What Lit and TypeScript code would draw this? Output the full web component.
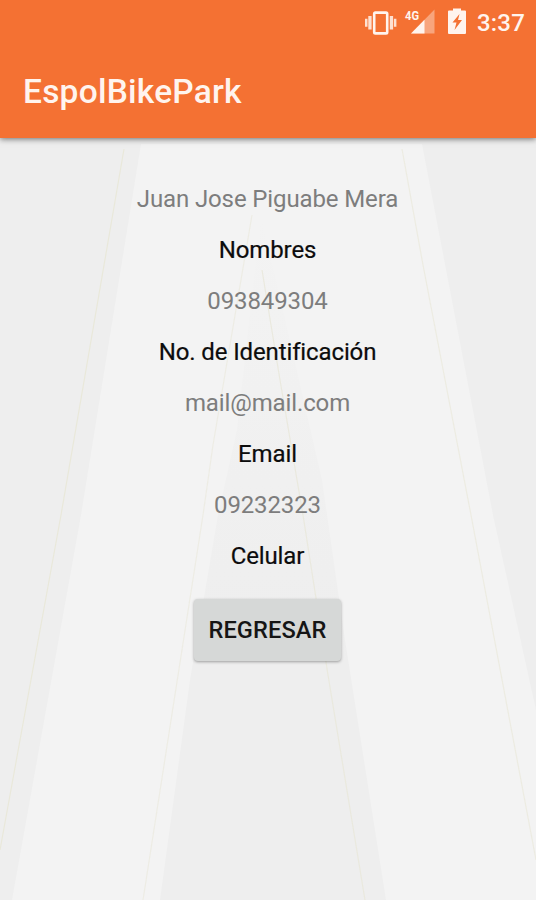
import { LitElement, html, css, svg } from "lit";
import { customElement, property } from "lit/decorators.js";

@customElement("status-bar")
class StatusBar extends LitElement {
  static styles = css`
    :host { display: flex; height: 45px; align-items: center; justify-content: flex-end; color: #fff4ee; }
    .icons { display: block; width: 116px; height: 45px; }
    .time { width: 59px; font-size: 24px; font-weight: 500; line-height: 46px; letter-spacing: .2px; white-space: nowrap; }
    .net { font: 700 12.5px "Roboto", sans-serif; }
  `;
  render() {
    return html`
      <svg class="icons" viewBox="361 0 116 45" fill="currentColor">
        ${svg`
          <rect x="374.200" y="12.600" width="13" height="20.800" rx="1.200" fill="none" stroke="currentColor" stroke-width="2.600"/>
          <path d="M368.300 16h3.300v13.500h-3.300zM365 18.800h2.500v8H365zM389.800 16h3.300v13.500h-3.300zM393.900 18.800h2.500v8h-2.500z" opacity=".85"/>
          <text class="net" x="405" y="19.600" textLength="14" lengthAdjust="spacingAndGlyphs">4G</text>
          <path d="M434.500 9.500V33.500H411z" opacity=".4"/>
          <path d="M424.500 19.700V33.500H411z"/>
          <path fill-rule="evenodd" d="M449 10.500h4V8.500h8v2h4q1 0 1 1v21.500q0 1-1 1H449q-1 0-1-1V11.500q0-1 1-1zM459.500 14l-7 8.500h4l-2 7.500 7.500-10h-4z"/>
        `}
      </svg>
      <span class="time">3:37</span>
    `;
  }
}

@customElement("profile-field")
class ProfileField extends LitElement {
  @property() value = "";
  @property() label = "";
  static styles = css`
    :host { display: block; text-align: center; font-size: 24px; letter-spacing: -.12px; line-height: 51px; white-space: nowrap; font-variant-ligatures: common-ligatures; }
    .value { color: #7d7d7d; }
    .label { color: #0c0c0c; -webkit-text-stroke: .2px #0c0c0c; }
  `;
  render() {
    return html`<div class="value">${this.value}</div><div class="label">${this.label}</div>`;
  }
}

@customElement("app-root")
class AppRoot extends LitElement {
  static styles = css`
    :host { display: block; height: 900px; font-family: Roboto, sans-serif; }
    .screen { position: relative; height: 900px; display: flex; flex-direction: column; overflow: hidden; background: #eeeeee; }
    .backdrop { position: absolute; inset: 0; width: 536px; height: 900px; }
    .seam { fill: none; stroke: #e9e8da; stroke-width: 1.2; }
    .bar { position: relative; height: 138px; background: #f47133; box-shadow: 0 1px 6px rgba(0, 0, 0, .55); }
    .title { margin: 0; padding: 23px 23px 0; font-size: 33.5px; letter-spacing: .22px; line-height: 48px; font-weight: 500; color: #fff4ee; }
    .content { position: relative; display: flex; flex-direction: column; align-items: center; padding: 36px 1px 0 0; }
    .button { margin-top: 17px; width: 147px; height: 62px; padding: 0; border: 0; border-radius: 4px; background: #d6d8d7; color: #151515; font: 500 23.6px Roboto, sans-serif; letter-spacing: .1px; box-shadow: 0 1px 3px rgba(0, 0, 0, .35); }
  `;
  fields = [
    { value: "Juan Jose Piguabe Mera", label: "Nombres" },
    { value: "093849304", label: "No. de Identificación" },
    { value: "mail@mail.com", label: "Email" },
    { value: "09232323", label: "Celular" },
  ];
  render() {
    return html`
      <div class="screen">
        <svg class="backdrop" viewBox="0 0 536 900">
          <defs>
            <linearGradient id="fold" x1="0" y1="215" x2="0" y2="660" gradientUnits="userSpaceOnUse">
              <stop offset="0" stop-color="#f3f3f3"/><stop offset="1" stop-color="#eeeeee"/>
            </linearGradient>
          </defs>
          <path fill="#f3f3f3" d="M141 144H422L493 515L536 710V900H12L81 515Z"/>
          <path fill="url(#fold)" d="M261 215L322 480L345 640L386 900H160L190 680L218 515L237 430Z"/>
          <path class="seam" d="M124 149L61 515L0 850"/>
          <path class="seam" opacity=".6" d="M252 215L213 445L203 515L143 900"/>
          <path class="seam" opacity=".85" d="M262 270L280 380L303 515L328 675L365 900"/>
          <path class="seam" opacity=".7" d="M402 149L423 265L471 515L536 860"/>
        </svg>
        <header class="bar">
          <status-bar></status-bar>
          <h1 class="title">EspolBikePark</h1>
        </header>
        <main class="content">
          ${this.fields.map((f) => html`<profile-field .value=${f.value} .label=${f.label}></profile-field>`)}
          <button class="button">REGRESAR</button>
        </main>
      </div>
    `;
  }
}
